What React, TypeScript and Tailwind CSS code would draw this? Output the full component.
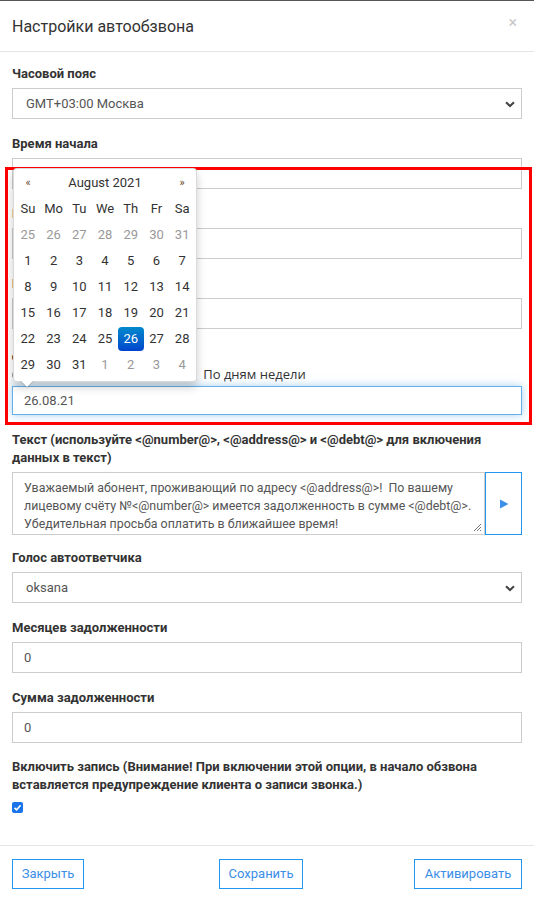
import React from "react";
import clsx from "clsx";

const font = { fontFamily: "Roboto, 'Noto Sans', sans-serif" };

type Day = { n: number; muted?: boolean; active?: boolean };

const weeks: Day[][] = [
    [25, 26, 27, 28, 29, 30, 31].map((n) => ({ n, muted: true })),
    [1, 2, 3, 4, 5, 6, 7].map((n) => ({ n })),
    [8, 9, 10, 11, 12, 13, 14].map((n) => ({ n })),
    [15, 16, 17, 18, 19, 20, 21].map((n) => ({ n })),
    [22, 23, 24, 25, 26, 27, 28].map((n) => ({ n, active: n === 26 })),
    [
        { n: 29 },
        { n: 30 },
        { n: 31 },
        { n: 1, muted: true },
        { n: 2, muted: true },
        { n: 3, muted: true },
        { n: 4, muted: true },
    ],
];

const Label = ({ children }: { children: React.ReactNode }) => (
    <div className="text-[13px] leading-[20px] font-bold text-[#333] mb-[4px]">{children}</div>
);

const Chevron = () => (
    <svg width="10" height="7" viewBox="0 0 10 7" className="absolute right-[6px] top-[12px]">
        <path d="M1 1.2 L5 5 L9 1.2" fill="none" stroke="#444" strokeWidth="2" />
    </svg>
);

const SelectBox = ({ value }: { value: string }) => (
    <div className="relative h-[31px] border border-[#ccc] bg-white flex items-center pl-[13px] text-[13px] text-[#555]">
        {value}
        <Chevron />
    </div>
);

const TextInput = ({ value }: { value?: string }) => (
    <div className="h-[31px] border border-[#ccc] bg-white flex items-center pl-[11px] text-[13px] text-[#555]">
        {value}
    </div>
);

const Field = ({ label, children }: { label: string; children: React.ReactNode }) => (
    <div className="mb-[15px]">
        <Label>{label}</Label>
        {children}
    </div>
);

function Calendar() {
    return (
        <div className="absolute left-[1px] bottom-[calc(100%+4px)] w-[184px] bg-white border border-black/15 rounded-[4px] shadow-[0_5px_10px_rgba(0,0,0,0.2)] px-[1px] pt-[1px] pb-[3px] z-10">
            <div className="flex h-[26px] items-center text-[13px] text-[#333]">
                <div className="w-[26px] text-center text-[11px] text-[#6b4a2a]">«</div>
                <div className="flex-1 text-center">August 2021</div>
                <div className="w-[26px] text-center text-[11px] text-[#6b4a2a]">»</div>
            </div>
            <div className="flex h-[26px] items-center text-[13px] text-[#333]">
                {["Su", "Mo", "Tu", "We", "Th", "Fr", "Sa"].map((d) => (
                    <div key={d} className="w-[26px] text-center">
                        {d}
                    </div>
                ))}
            </div>
            {weeks.map((week, i) => (
                <div key={i} className="flex h-[26px] items-center text-[13px]">
                    {week.map((d, j) => (
                        <div
                            key={j}
                            className={clsx(
                                "w-[26px] h-[24px] flex items-center justify-center rounded-[4px]",
                                d.muted ? "text-[#999]" : "text-[#333]",
                                d.active && "bg-gradient-to-b from-[#0088cc] to-[#0044cc] text-white"
                            )}>
                            {d.n}
                        </div>
                    ))}
                </div>
            ))}
            <div className="absolute left-[6px] -bottom-[7px] w-0 h-0 border-l-[7px] border-r-[7px] border-t-[7px] border-l-transparent border-r-transparent border-t-black/20" />
            <div className="absolute left-[7px] -bottom-[6px] w-0 h-0 border-l-[6px] border-r-[6px] border-t-[6px] border-l-transparent border-r-transparent border-t-white" />
        </div>
    );
}

export default function App() {
    return (
        <div className="relative w-[534px] min-h-[897px] bg-white text-[#333]" style={font}>
            <div className="h-[1px] bg-[#555]" />
            <div className="flex items-center justify-between h-[51px] px-[12px] border-b border-[#e5e5e5]">
                <div className="text-[16px] text-[#333] pt-[2px]">Настройки автообзвона</div>
                <div className="text-[16px] leading-none text-[#c8c8c8] mr-[5px] mb-[6px]">×</div>
            </div>

            <div className="px-[12px] pt-[12px]">
                <Field label="Часовой пояс">
                    <SelectBox value="GMT+03:00 Москва" />
                </Field>
                <Field label="Время начала">
                    <TextInput />
                </Field>
                <Field label="Время окончания">
                    <TextInput />
                </Field>
                <Field label="Интервал между звонками">
                    <TextInput />
                </Field>

                <div className="mb-[16px]">
                    <div className="text-[13px] leading-[18px] font-bold text-[#333] mb-[4px]">Дни обзвона</div>
                    <div
                        className="flex items-center h-[18px] text-[13px] text-[#333] mb-[2px]"
                        style={{ fontFamily: "'Open Sans', 'Noto Sans', sans-serif" }}>
                        <span className="inline-block w-[12px] h-[12px] rounded-full border border-[#999] mr-[4px]" />
                        <span>По датам</span>
                        <span className="ml-[117px]">По дням недели</span>
                    </div>
                    <div className="relative">
                        <Calendar />
                        <div className="h-[29px] border border-[#66afe9] shadow-[0_0_8px_rgba(102,175,233,0.6)] bg-white flex items-center pl-[11px] text-[13px] text-[#555]">
                            26.08.21
                        </div>
                    </div>
                </div>

                <div className="mb-[13px]">
                    <div className="text-[13px] leading-[18px] font-bold text-[#333] mb-[5px]">
                        Текст (используйте &lt;@number@&gt;, &lt;@address@&gt; и &lt;@debt@&gt; для включения
                        <br />
                        данных в текст)
                    </div>
                    <div className="flex h-[63px]">
                        <div className="relative flex-1 border border-[#ccc] pl-[11px] pt-[6px] text-[12.4px] leading-[18px] text-[#555] whitespace-nowrap overflow-hidden">
                            <div>Уважаемый абонент, проживающий по адресу &lt;@address@&gt;!&nbsp; По вашему</div>
                            <div>лицевому счёту №&lt;@number@&gt; имеется задолженность в сумме &lt;@debt@&gt;.</div>
                            <div>Убедительная просьба оплатить в ближайшее время!</div>
                            <svg width="9" height="9" viewBox="0 0 9 9" className="absolute right-[2px] bottom-[2px]">
                                <path d="M1 8 L8 1 M4 8 L8 4 M7 8 L8 7" stroke="#777" strokeWidth="1" />
                            </svg>
                        </div>
                        <div className="w-[37px] border border-[#2196f3] flex items-center justify-center">
                            <svg width="10" height="10" viewBox="0 0 10 10">
                                <path d="M1 0.5 L9.5 5 L1 9.5 Z" fill="#3d8fe8" />
                            </svg>
                        </div>
                    </div>
                </div>

                <Field label="Голос автоответчика">
                    <SelectBox value="oksana" />
                </Field>
                <Field label="Месяцев задолженности">
                    <TextInput value="0" />
                </Field>
                <Field label="Сумма задолженности">
                    <TextInput value="0" />
                </Field>

                <div className="pb-[32px]">
                    <div className="text-[13px] leading-[18px] font-bold text-[#333] mb-[8px]">
                        Включить запись (Внимание! При включении этой опции, в начало обзвона
                        <br />
                        вставляется предупреждение клиента о записи звонка.)
                    </div>
                    <svg width="11" height="11" viewBox="0 0 11 11">
                        <rect width="11" height="11" rx="2" fill="#1a73e8" />
                        <path d="M2.5 5.8 L4.6 7.8 L8.6 3.2" fill="none" stroke="#fff" strokeWidth="1.6" />
                    </svg>
                </div>
            </div>

            <div className="border-t border-[#e5e5e5] px-[12px] pt-[13px] pb-[8px] flex justify-between text-[13px] text-[#3a8ee6]">
                <div className="h-[30px] w-[72px] border border-[#2196f3] flex items-center justify-center">Закрыть</div>
                <div className="h-[30px] w-[84px] border border-[#2196f3] flex items-center justify-center ml-[24px]">
                    Сохранить
                </div>
                <div className="h-[30px] w-[108px] border border-[#2196f3] flex items-center justify-center">
                    Активировать
                </div>
            </div>

            <div className="pointer-events-none absolute left-[5px] top-[167px] w-[527px] h-[258px] border-[3px] border-[#ff0000]" />
        </div>
    );
}
